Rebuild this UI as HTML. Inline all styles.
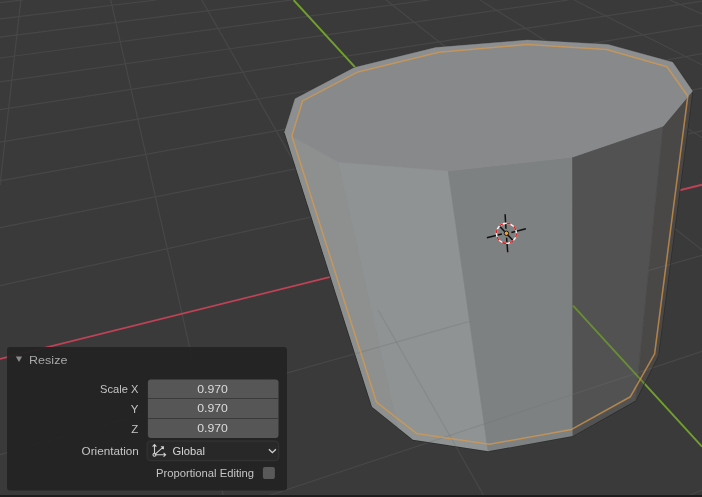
<!DOCTYPE html>
<html><head><meta charset="utf-8"><style>
html,body{margin:0;padding:0;}
body{width:702px;height:497px;overflow:hidden;background:#3a3a3a;position:relative;font-family:"Liberation Sans",sans-serif;}
svg{position:absolute;left:0;top:0;will-change:transform;}
</style></head><body>
<svg width="702" height="497" viewBox="0 0 702 497">
<defs>
<clipPath id="sil"><polygon points="284.5,132.6 295.1,98.8 354.5,67.6 435.7,47.6 527.3,40.1 607.9,44.4 672.7,62.2 692.5,91.1 658.2,355.7 635.7,400.6 572.9,436.0 488.1,451.2 412.9,439.8 371.9,406.7"/></clipPath>
<clipPath id="xr"><polygon points="0.0,256.8 327.1,256.8 326.8,263.6 327.9,270.3 330.4,276.9 334.6,283.3 340.2,289.4 347.4,295.2 356.2,300.5 366.4,305.4 377.9,309.7 390.8,313.4 404.9,316.4 420.0,318.8 436.0,320.3 452.7,321.2 470.0,321.2 487.5,320.4 505.2,318.9 522.8,316.6 540.1,313.6 556.9,309.9 573.1,305.6 588.4,300.8 602.8,295.4 616.1,289.6 628.3,283.5 639.1,277.1 648.6,270.4 656.8,263.7 663.5,256.8 668.8,249.9 672.8,243.1 675.3,236.4 676.5,229.8 676.4,223.4 702.0,223.4 702.0,497.0 0.0,497.0"/></clipPath>
</defs>
<rect width="702" height="497" fill="#3a3a3a"/>
<g stroke="#474747" stroke-width="1.2"><line x1="0.0" y1="185.1" x2="20.8" y2="0.0"/><line x1="223.6" y1="497.0" x2="110.8" y2="0.0"/><line x1="484.6" y1="497.0" x2="201.8" y2="0.0"/><line x1="702.0" y1="250.0" x2="386.2" y2="0.0"/><line x1="702.0" y1="137.6" x2="479.8" y2="0.0"/><line x1="702.0" y1="64.8" x2="574.2" y2="0.0"/><line x1="702.0" y1="13.9" x2="669.6" y2="0.0"/><line x1="684.9" y1="497.0" x2="702.0" y2="490.1"/><line x1="264.7" y1="497.0" x2="702.0" y2="351.4"/><line x1="0.0" y1="454.6" x2="702.0" y2="255.3"/><line x1="0.0" y1="285.6" x2="702.0" y2="130.8"/><line x1="0.0" y1="227.7" x2="702.0" y2="88.1"/><line x1="0.0" y1="180.8" x2="702.0" y2="53.6"/><line x1="0.0" y1="142.1" x2="702.0" y2="25.1"/><line x1="0.0" y1="109.6" x2="702.0" y2="1.2"/><line x1="0.0" y1="81.9" x2="568.3" y2="0.0"/><line x1="0.0" y1="58.0" x2="429.1" y2="0.0"/><line x1="0.0" y1="37.1" x2="291.9" y2="-0.0"/><line x1="0.0" y1="18.8" x2="156.5" y2="0.0"/><line x1="0.0" y1="2.6" x2="23.1" y2="0.0"/></g>
<line x1="0.0" y1="358.9" x2="702.0" y2="184.7" stroke="#bf4256" stroke-width="1.9"/>
<line x1="702.0" y1="446.6" x2="293.6" y2="0.0" stroke="#71a02d" stroke-width="1.9"/>
<polygon points="284.5,132.6 295.1,98.8 354.5,67.6 435.7,47.6 527.3,40.1 607.9,44.4 672.7,62.2 692.5,91.1 658.2,355.7 635.7,400.6 572.9,436.0 488.1,451.2 412.9,439.8 371.9,406.7" fill="#959797" stroke="#2c2c2c" stroke-width="1.4" stroke-linejoin="round"/>
<g clip-path="url(#sil)"><polygon points="284.5,132.6 338.5,162.0 407.7,470.0 392.1,470.0" fill="#8d908f" stroke="#8d908f" stroke-width="0.6"/><polygon points="338.5,162.0 448.2,170.8 490.8,470.0 407.7,470.0" fill="#8f9393" stroke="#8f9393" stroke-width="0.6"/><polygon points="448.2,170.8 572.5,157.1 572.9,470.0 490.8,470.0" fill="#7e8182" stroke="#7e8182" stroke-width="0.6"/><polygon points="572.5,157.1 663.2,126.1 628.7,470.0 572.9,470.0" fill="#525252" stroke="#525252" stroke-width="0.6"/><polygon points="663.2,126.1 692.5,91.1 700.0,470.0 628.7,470.0" fill="#4a4747" stroke="#4a4747" stroke-width="0.6"/></g>
<polygon points="284.5,132.6 295.1,98.8 354.5,67.6 435.7,47.6 527.3,40.1 607.9,44.4 672.7,62.2 692.5,91.1 663.2,126.1 572.5,157.1 448.2,170.8 338.5,162.0" fill="#8c8e90" stroke="#8c8e90" stroke-width="0.5"/>
<polygon points="291.8,136.0 302.6,100.9 358.0,71.9 439.1,52.2 527.3,44.4 606.5,49.6 666.9,66.8 687.8,96.2 663.2,126.1 572.5,157.1 448.2,170.8 338.5,162.0" fill="#87898b"/>
<g clip-path="url(#sil)"><g clip-path="url(#xr)">
<g stroke="#707070" stroke-opacity="0.3" stroke-width="1.1"><line x1="0.0" y1="185.1" x2="20.8" y2="0.0"/><line x1="223.6" y1="497.0" x2="110.8" y2="0.0"/><line x1="484.6" y1="497.0" x2="201.8" y2="0.0"/><line x1="702.0" y1="250.0" x2="386.2" y2="0.0"/><line x1="702.0" y1="137.6" x2="479.8" y2="0.0"/><line x1="702.0" y1="64.8" x2="574.2" y2="0.0"/><line x1="702.0" y1="13.9" x2="669.6" y2="0.0"/><line x1="684.9" y1="497.0" x2="702.0" y2="490.1"/><line x1="264.7" y1="497.0" x2="702.0" y2="351.4"/><line x1="0.0" y1="454.6" x2="702.0" y2="255.3"/><line x1="0.0" y1="285.6" x2="702.0" y2="130.8"/><line x1="0.0" y1="227.7" x2="702.0" y2="88.1"/><line x1="0.0" y1="180.8" x2="702.0" y2="53.6"/><line x1="0.0" y1="142.1" x2="702.0" y2="25.1"/><line x1="0.0" y1="109.6" x2="702.0" y2="1.2"/><line x1="0.0" y1="81.9" x2="568.3" y2="0.0"/><line x1="0.0" y1="58.0" x2="429.1" y2="0.0"/><line x1="0.0" y1="37.1" x2="291.9" y2="-0.0"/><line x1="0.0" y1="18.8" x2="156.5" y2="0.0"/><line x1="0.0" y1="2.6" x2="23.1" y2="0.0"/></g>
<line x1="702.0" y1="446.6" x2="293.6" y2="0.0" stroke="#71a02d" stroke-width="1.9" stroke-opacity="0.75"/>
</g></g>
<polygon points="291.8,136.0 302.6,100.9 358.0,71.9 439.1,52.2 527.3,44.4 606.5,49.6 666.9,66.8 687.8,96.2 654.6,353.8 630.4,396.7 571.6,429.4 489.3,444.3 416.4,433.4 376.5,402.2" fill="none" stroke="#d89a4a" stroke-opacity="0.72" stroke-width="1.55" stroke-linejoin="round"/>
<g transform="translate(506.4,233.3)">
<g stroke="#111" stroke-width="1.5">
<line x1="-1.3" y1="-19" x2="-0.4" y2="-4.5"/>
<line x1="0.2" y1="4.5" x2="1.3" y2="19"/>
<line x1="-19.5" y1="4.5" x2="-4.6" y2="0.8"/>
<line x1="5" y1="-0.9" x2="19.5" y2="-4.6"/>
<line x1="-6.5" y1="-6.9" x2="6.8" y2="7.5"/>
</g>
<circle r="10" fill="none" stroke="#f2f2f2" stroke-width="1.4"/>
<circle r="10" fill="none" stroke="#e81818" stroke-width="1.4" stroke-dasharray="3.93 3.93"/>
<circle r="2.2" fill="#f0a030" stroke="#111" stroke-width="0.9"/>
</g>
<rect x="7" y="347" width="280" height="143.5" rx="3" fill="#232323" fill-opacity="0.94"/>
<polygon points="15.8,356.4 22.1,356.4 19,361.9" fill="#8a8a8a"/>
<g font-family="Liberation Sans" font-size="11.5">
<text x="29" y="363.8" fill="#a8a8a8" textLength="38.4" lengthAdjust="spacingAndGlyphs">Resize</text>
<g fill="#c4c4c4" text-anchor="end">
<text x="138.3" y="393.4" textLength="38.2" lengthAdjust="spacingAndGlyphs">Scale X</text>
<text x="138.3" y="413">Y</text>
<text x="138.3" y="433.2">Z</text>
<text x="138.8" y="454.7" textLength="57.2" lengthAdjust="spacingAndGlyphs">Orientation</text>
</g>
<rect x="147.9" y="379.6" width="130.6" height="58.3" rx="3" fill="#565656"/>
<rect x="147.9" y="398" width="130.6" height="1" fill="#3a3a3a"/>
<rect x="147.9" y="418" width="130.6" height="1" fill="#3a3a3a"/>
<g fill="#dcdcdc" text-anchor="middle">
<text x="212.6" y="393.1" textLength="30.6" lengthAdjust="spacingAndGlyphs">0.970</text>
<text x="212.6" y="412.1" textLength="30.6" lengthAdjust="spacingAndGlyphs">0.970</text>
<text x="212.6" y="432" textLength="30.6" lengthAdjust="spacingAndGlyphs">0.970</text>
</g>
<rect x="147.1" y="441" width="131.6" height="19.7" rx="3.5" fill="#282828" stroke="#363636" stroke-width="1"/>
<text x="172.5" y="454.8" fill="#d6d6d6" textLength="32.4" lengthAdjust="spacingAndGlyphs">Global</text>
<text x="156" y="477.3" fill="#c4c4c4" textLength="98.1" lengthAdjust="spacingAndGlyphs">Proportional Editing</text>
</g>
<g stroke="#d0d0d0" stroke-width="1.1" fill="none">
<path d="M154.5,454.3 V444.6 M152.6,446.6 L154.5,444.6 L156.4,446.6 M155,454.8 H165.6 M163.6,452.9 L165.6,454.8 L163.6,456.7 M155.5,453.8 L163.4,446.8 M160.9,446.8 H163.4 V449.3"/>
<circle cx="154.5" cy="454.8" r="1.5"/>
<path d="M268.9,449.2 L272.4,452.7 L275.9,449.2" stroke-width="1.3"/>
</g>
<rect x="262.9" y="467" width="12" height="12" rx="2" fill="#595959"/>
<rect x="0" y="495" width="702" height="2" fill="#1d1d1d"/>
</svg>
</body></html>
